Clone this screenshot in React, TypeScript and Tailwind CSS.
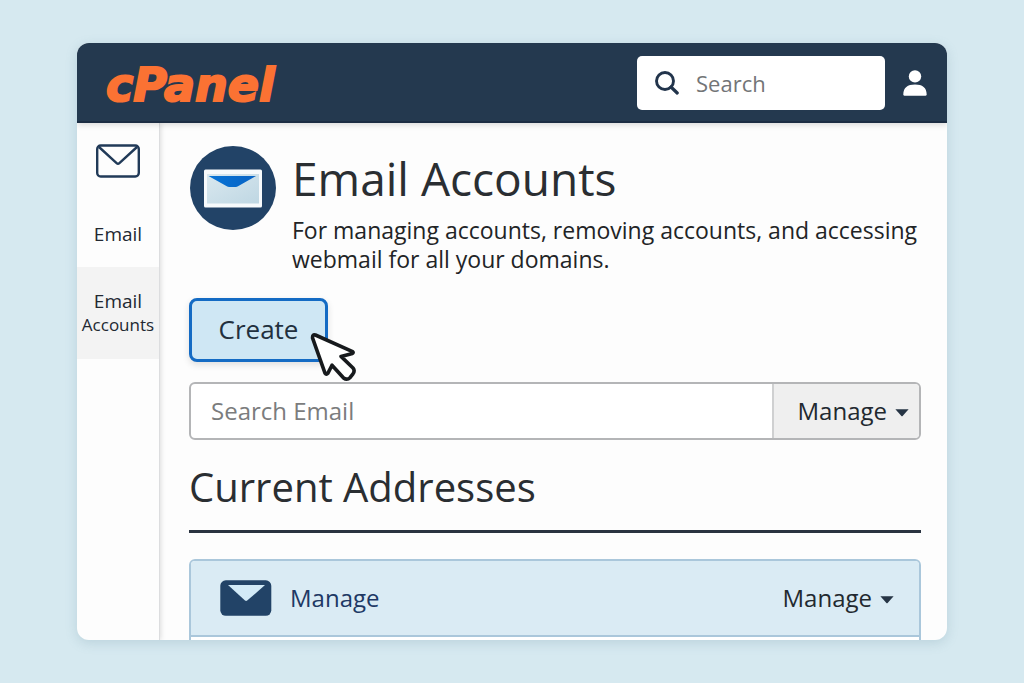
import { ReactNode } from "react";

const sidebarLinks = [
  { id: "email", href: "#email", lines: ["Email"] },
  { id: "accounts", href: "#accounts", lines: ["Email", "Accounts"] },
];

function SearchIcon() {
  return (
    <svg viewBox="0 0 24 24" className="size-6 shrink-0" fill="none" aria-hidden="true">
      <circle cx="10" cy="10" r="8.5" stroke="#22344b" strokeWidth="2.9" />
      <path d="M16 16l6.2 6" stroke="#22344b" strokeWidth="3.2" strokeLinecap="round" />
    </svg>
  );
}

function UserIcon() {
  return (
    <svg viewBox="0 0 24 26" className="h-[26px] w-6" fill="#fff" aria-hidden="true">
      <circle cx="12" cy="6.4" r="6.2" />
      <path d="M0.3 24.6C0.3 17.5 4.6 14.4 12 14.4s11.7 3.1 11.7 10.2c0 .7-.4 1.1-1.1 1.1H1.4c-.7 0-1.1-.4-1.1-1.1z" />
    </svg>
  );
}

function EnvelopeOutline() {
  return (
    <svg viewBox="0 0 44 34" className="h-[34px] w-11" fill="none" stroke="#213a58" aria-hidden="true">
      <rect x="1.2" y="1.5" width="41.6" height="31" rx="3.5" strokeWidth="2.4" />
      <path d="M3 3l17.6 16.1c.9.8 1.9.8 2.8 0L41 3" strokeWidth="2.4" />
    </svg>
  );
}

function EnvelopeBadge() {
  return (
    <svg viewBox="0 0 86 84" className="h-[84px] w-[86px] shrink-0" aria-hidden="true">
      <defs>
        <linearGradient id="letter" x1="0" y1="0" x2="1" y2="1">
          <stop offset="0" stopColor="#d9e8ef" />
          <stop offset="1" stopColor="#bfd7e3" />
        </linearGradient>
        <linearGradient id="flap" x1="0" y1="0" x2="1" y2="0">
          <stop offset="0" stopColor="#0874d6" />
          <stop offset="1" stopColor="#0863c4" />
        </linearGradient>
      </defs>
      <ellipse cx="43" cy="42" rx="43" ry="42" fill="#224367" />
      <rect x="14" y="23.5" width="58" height="38" rx="1.5" fill="#f7fafc" />
      <rect x="17" y="28" width="52" height="29.5" fill="url(#letter)" />
      <path d="M18.5 30h47.5L48 40.2q-1 .8-2.2.8h-6.6q-1.4 0-2.4-.8z" fill="url(#flap)" />
    </svg>
  );
}

function EnvelopeSolid() {
  return (
    <svg viewBox="0 0 52 36" className="h-9 w-[52px]" aria-hidden="true">
      <rect x="0.3" y="0.3" width="51" height="35.5" rx="5.5" fill="#224367" />
      <path d="M8 5h37L27.2 20.6q-1.1.9-2.2 0z" fill="#d2eaf7" />
    </svg>
  );
}

function Caret() {
  return (
    <svg viewBox="0 0 14 8" className="mt-1 h-2 w-3.5" fill="#263545" aria-hidden="true">
      <path d="M0.4 0.3h13.2L7.6 7q-.6.6-1.2 0z" />
    </svg>
  );
}

function Cursor() {
  return (
    <svg
      viewBox="0 0 46 50"
      className="absolute top-[34px] left-[121px] h-[50px] w-[46px]"
      fill="#fff"
      stroke="#171a1d"
      strokeWidth="3.6"
      strokeLinejoin="round"
      strokeLinecap="round"
      aria-hidden="true"
    >
      <path d="M5.4 3L42.6 19.6Q43.8 20.6 42.4 21.4L31 24.4L43 36Q45.2 38.6 43 41.8L40.2 45.4Q37 48.6 33.6 46L22 33.2L17.8 41.4Q16.4 43 15 41.2L2.6 6.2Q2.2 2.2 5.4 3z" />
    </svg>
  );
}

function MenuButton({ children }: { children: ReactNode }) {
  return (
    <button type="button" className="flex items-center gap-2 text-[24px] leading-8 text-[#22292f]">
      {children}
      <Caret />
    </button>
  );
}

export default function App() {
  return (
    <div className="flex h-screen flex-col bg-[#d6e9f0] px-[77px] py-[43px] font-['Open_Sans','Noto_Sans',sans-serif]">
      <div className="flex min-h-0 flex-1 flex-col overflow-hidden rounded-xl bg-[#fdfdfd] shadow-[0_3px_12px_rgba(90,130,150,0.22)]">
        <header className="z-10 flex h-20 shrink-0 items-center border-b-2 border-[#1c2d43] bg-[#24394f] pt-0.5 pr-5 pl-[29px] shadow-[0_2px_6px_rgba(0,0,0,0.14)]">
          <a
            href="#home"
            className="pt-1 font-['DejaVu_Sans',sans-serif] text-[46px] leading-none font-bold text-[#fb7233] italic [-webkit-text-stroke:2px_#fb7233]"
          >
            cPanel
          </a>
          <label className="ml-auto flex h-[54px] w-[248px] items-center gap-[17px] rounded-[5px] bg-white px-[18px]">
            <SearchIcon />
            <input
              type="search"
              aria-label="Search"
              placeholder="Search"
              className="min-w-0 flex-1 text-[22px] leading-8 outline-none placeholder:text-[#737577]"
            />
          </label>
          <button type="button" aria-label="Account" className="ml-[18px]">
            <UserIcon />
          </button>
        </header>

        <div className="flex min-h-0 flex-1">
          <nav className="w-[83px] shrink-0 border-r border-[#dcdddf] text-center text-[#222831] shadow-[1px_0_5px_rgba(0,0,0,0.13)]">
            {sidebarLinks.map((link) =>
              link.lines.length === 1 ? (
                <a key={link.id} href={link.href} className="flex h-36 flex-col items-center justify-between pt-[21px] pb-[21px]">
                  <EnvelopeOutline />
                  <span className="text-[19px] leading-6">{link.lines[0]}</span>
                </a>
              ) : (
                <a key={link.id} href={link.href} className="flex h-[92px] flex-col justify-center bg-[#f3f3f3]">
                  <span className="text-[19px] leading-6">{link.lines[0]}</span>
                  <span className="text-[17px] leading-6">{link.lines[1]}</span>
                </a>
              ),
            )}
          </nav>

          <main className="min-w-0 flex-1 overflow-hidden pt-[23px] pr-[26px] pl-[29px]">
            <div className="flex gap-4 pl-px">
              <EnvelopeBadge />
              <div>
                <h1 className="text-[46px] leading-[64px] text-[#2a2e32]">Email Accounts</h1>
                <p className="mt-1.5 text-[23px] leading-[29px] text-[#222426]">
                  For managing accounts, removing accounts, and accessing webmail for all your domains.
                </p>
              </div>
            </div>

            <div className="relative mt-6 w-fit">
              <button
                type="button"
                className="h-16 w-[139px] rounded-lg border-3 border-[#146bc4] bg-[#cfe7f4] pb-0.5 text-[26px] text-[#22303e] shadow-[0_3px_7px_rgba(0,0,0,0.12)]"
              >
                Create
              </button>
              <Cursor />
            </div>

            <div className="mt-5 flex h-[58px] overflow-hidden rounded-md border-2 border-[#b4b5b7] bg-white">
              <input
                type="search"
                aria-label="Search Email"
                placeholder="Search Email"
                className="min-w-0 flex-1 px-5 text-[24px] outline-none placeholder:text-[#7b7c7d]"
              />
              <div className="flex items-center border-l-2 border-[#cfd0d1] bg-[#efefef] pr-2.5 pl-6">
                <MenuButton>Manage</MenuButton>
              </div>
            </div>

            <h2 className="mt-[18px] text-[40px] leading-[58px] text-[#2a2e32]">Current Addresses</h2>
            <hr className="mt-3.5 border-t-3 border-[#2a3340]" />

            <ul className="mt-[26px] rounded-md border-2 border-[#aac7db]">
              <li className="flex h-[76px] items-center justify-between rounded-t-sm border-b-2 border-[#aac7db] bg-[#daebf4] pr-[25px] pl-[29px]">
                <a href="#manage" className="flex items-center gap-[18px] text-[24px] leading-8 text-[#203864]">
                  <EnvelopeSolid />
                  Manage
                </a>
                <MenuButton>Manage</MenuButton>
              </li>
              <li className="h-[76px] bg-white" />
            </ul>
          </main>
        </div>
      </div>
    </div>
  );
}
